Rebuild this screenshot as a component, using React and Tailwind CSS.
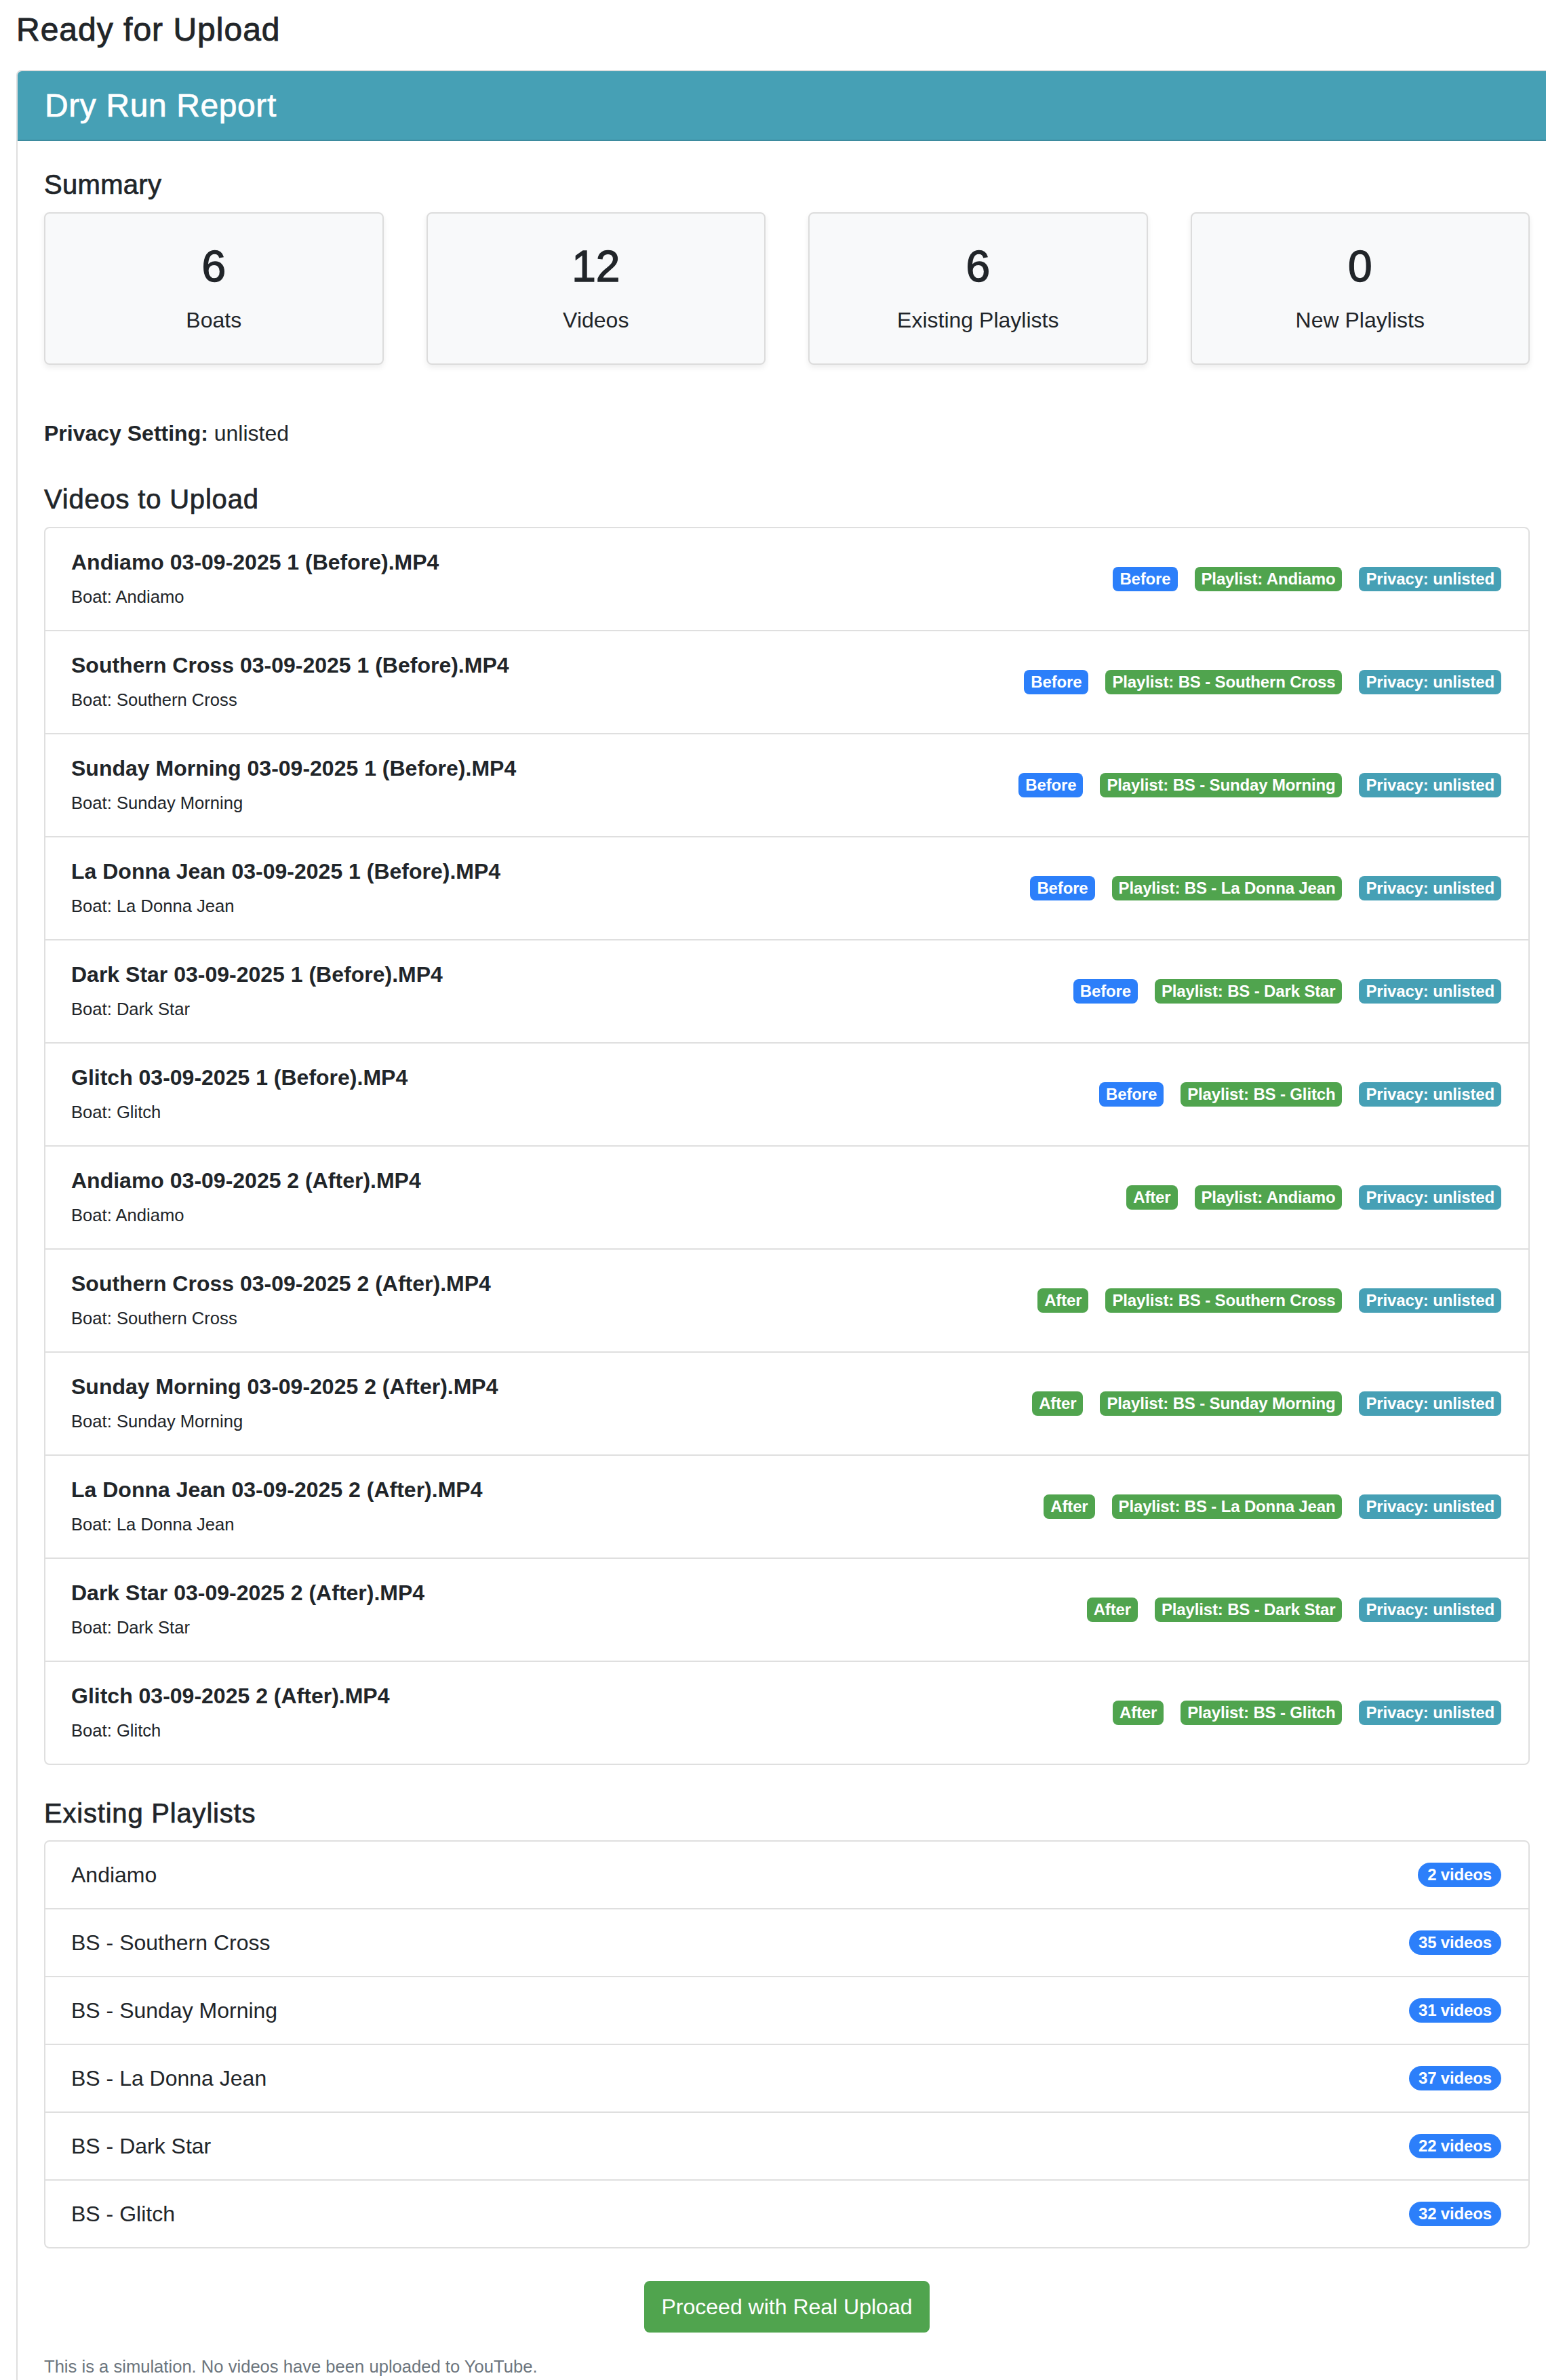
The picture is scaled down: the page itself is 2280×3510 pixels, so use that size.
import React from "react";

const videos = [
  ["Andiamo 03-09-2025 1 (Before).MP4", "Andiamo", "Before", "Andiamo"],
  ["Southern Cross 03-09-2025 1 (Before).MP4", "Southern Cross", "Before", "BS - Southern Cross"],
  ["Sunday Morning 03-09-2025 1 (Before).MP4", "Sunday Morning", "Before", "BS - Sunday Morning"],
  ["La Donna Jean 03-09-2025 1 (Before).MP4", "La Donna Jean", "Before", "BS - La Donna Jean"],
  ["Dark Star 03-09-2025 1 (Before).MP4", "Dark Star", "Before", "BS - Dark Star"],
  ["Glitch 03-09-2025 1 (Before).MP4", "Glitch", "Before", "BS - Glitch"],
  ["Andiamo 03-09-2025 2 (After).MP4", "Andiamo", "After", "Andiamo"],
  ["Southern Cross 03-09-2025 2 (After).MP4", "Southern Cross", "After", "BS - Southern Cross"],
  ["Sunday Morning 03-09-2025 2 (After).MP4", "Sunday Morning", "After", "BS - Sunday Morning"],
  ["La Donna Jean 03-09-2025 2 (After).MP4", "La Donna Jean", "After", "BS - La Donna Jean"],
  ["Dark Star 03-09-2025 2 (After).MP4", "Dark Star", "After", "BS - Dark Star"],
  ["Glitch 03-09-2025 2 (After).MP4", "Glitch", "After", "BS - Glitch"],
];

const playlists = [
  ["Andiamo", 2],
  ["BS - Southern Cross", 35],
  ["BS - Sunday Morning", 31],
  ["BS - La Donna Jean", 37],
  ["BS - Dark Star", 22],
  ["BS - Glitch", 32],
];

const stats = [
  ["6", "Boats"],
  ["12", "Videos"],
  ["6", "Existing Playlists"],
  ["0", "New Playlists"],
];

function Badge({ color, children }) {
  return (
    <span
      className={`inline-block rounded-[8px] px-[10px] py-[6px] text-[24px] leading-[24px] font-bold tracking-[-0.15px] text-white whitespace-nowrap ${color}`}
    >
      {children}
    </span>
  );
}

export default function App() {
  return (
    <div
      className="w-full h-[3510px] overflow-hidden bg-white text-[#212529]"
      style={{ fontFamily: '"Liberation Sans", Arial, Helvetica, sans-serif' }}
    >
      <div className="pl-[24px] pt-[15px]">
        <h3 className="text-[48px] leading-[57.6px] font-medium tracking-[1px] [-webkit-text-stroke:0.9px] mb-[30px]">
          Ready for Upload
        </h3>

        <div className="w-[2273px] border-2 border-[#dfdfdf] rounded-[8px]">
          <div className="bg-[#46a0b5] border-b-2 border-[#3d8b9e] rounded-t-[6px] px-[40px] py-[22px]">
            <h4 className="text-[48px] leading-[57.6px] font-medium tracking-[0.6px] [-webkit-text-stroke:0.7px] text-white">
              Dry Run Report
            </h4>
          </div>

          <div className="px-[39px] pt-[40px]">
            <h5 className="text-[40px] leading-[48px] font-medium tracking-[0.3px] [-webkit-text-stroke:0.7px] mb-[17px]">
              Summary
            </h5>
            <div className="grid grid-cols-4 gap-[63px]">
              {stats.map(([n, l], i) => (
                <div
                  key={i}
                  className="bg-[#f8f9fa] border-2 border-[#dcdcdc] rounded-[8px] shadow-[0_4px_8px_rgba(0,0,0,0.075)] py-[40px] text-center"
                >
                  <div className="text-[64px] leading-[76.8px] font-medium [-webkit-text-stroke:1.4px] mb-[16px]">{n}</div>
                  <div className="text-[32px] leading-[48px]">{l}</div>
                </div>
              ))}
            </div>

            <p className="mt-[77px] text-[32px] leading-[48px]">
              <strong className="font-bold">Privacy Setting:</strong> unlisted
            </p>

            <h5 className="mt-[49px] text-[40px] leading-[48px] font-medium tracking-[0.8px] [-webkit-text-stroke:0.7px] mb-[17px]">
              Videos to Upload
            </h5>
            <div className="border-2 border-[#dfdfdf] rounded-[8px]">
              {videos.map(([title, boat, phase, pl], i) => (
                <div
                  key={i}
                  className={`flex items-center justify-between pl-[38px] pr-[40px] pt-[31px] pb-[30px] ${
                    i < videos.length - 1 ? "border-b-2 border-[#dfdfdf]" : ""
                  }`}
                >
                  <div>
                    <div className="text-[32px] leading-[38px] font-bold mb-[13px]">{title}</div>
                    <div className="text-[25.6px] leading-[38px]">Boat: {boat}</div>
                  </div>
                  <div className="flex items-center gap-[25px]">
                    <Badge color={phase === "Before" ? "bg-[#2c7ffa]" : "bg-[#50a44e]"}>{phase}</Badge>
                    <Badge color="bg-[#50a44e]">Playlist: {pl}</Badge>
                    <Badge color="bg-[#46a0b5]">Privacy: unlisted</Badge>
                  </div>
                </div>
              ))}
            </div>

            <h5 className="mt-[47px] text-[40px] leading-[48px] font-medium tracking-[0.8px] [-webkit-text-stroke:0.7px] mb-[16px]">
              Existing Playlists
            </h5>
            <div className="border-2 border-[#dfdfdf] rounded-[8px]">
              {playlists.map(([name, count], i) => (
                <div
                  key={i}
                  className={`flex items-center justify-between pl-[38px] pr-[40px] py-[25px] ${
                    i < playlists.length - 1 ? "border-b-2 border-[#dfdfdf]" : ""
                  }`}
                >
                  <span className="text-[32px] leading-[48px]">{name}</span>
                  <span className="inline-block rounded-full bg-[#2c7ffa] px-[14px] py-[6px] text-[24px] leading-[24px] font-bold tracking-[-0.15px] text-white">
                    {count} videos
                  </span>
                </div>
              ))}
            </div>

            <div className="mt-[48px] text-center">
              <button className="inline-block bg-[#50a44e] border-2 border-[#50a44e] text-white rounded-[8px] px-[24px] py-[12px] text-[32px] leading-[48px]">
                Proceed with Real Upload
              </button>
            </div>

            <p className="mt-[31px] text-[25.6px] leading-[38.4px] text-[#6c757d] pb-[40px]">
              This is a simulation. No videos have been uploaded to YouTube.
            </p>
          </div>
        </div>
      </div>
    </div>
  );
}
